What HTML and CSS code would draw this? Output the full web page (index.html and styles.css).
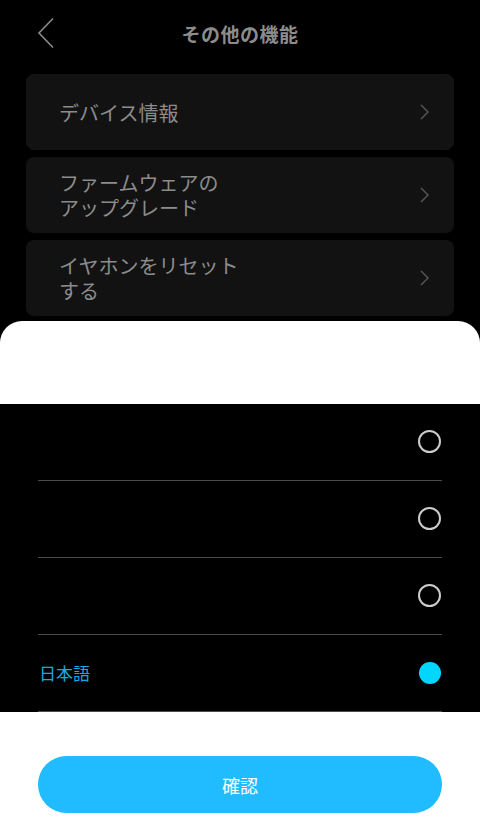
FILE: index.html
```html
<!DOCTYPE html>
<html lang="ja">
<head>
    <meta charset="UTF-8">
    <meta name="viewport" content="width=device-width, initial-scale=1.0">
    <title>その他の機能</title>
    <link rel="stylesheet" href="styles.css">
</head>
<body>
    <div class="screen">
        <header class="top-bar">
            <button type="button" class="back-btn" aria-label="戻る">
                <svg width="18" height="32" viewBox="0 0 18 32" fill="none">
                    <path d="M16 1.5L2 16L16 30.5" stroke="#8c8c8c" stroke-width="1.6"/>
                </svg>
            </button>
            <h1>その他の機能</h1>
        </header>

        <main class="menu">
            <div class="menu-item">
                <span class="menu-label">デバイス情報</span>
                <svg class="chevron" width="9" height="16" viewBox="0 0 9 16" fill="none">
                    <path d="M1 1l7 7-7 7" stroke="#5a5a5a" stroke-width="1.4"/>
                </svg>
            </div>
            <div class="menu-item">
                <span class="menu-label">ファームウェアの<br>アップグレード</span>
                <svg class="chevron" width="9" height="16" viewBox="0 0 9 16" fill="none">
                    <path d="M1 1l7 7-7 7" stroke="#5a5a5a" stroke-width="1.4"/>
                </svg>
            </div>
            <div class="menu-item">
                <span class="menu-label">イヤホンをリセット<br>する</span>
                <svg class="chevron" width="9" height="16" viewBox="0 0 9 16" fill="none">
                    <path d="M1 1l7 7-7 7" stroke="#5a5a5a" stroke-width="1.4"/>
                </svg>
            </div>
        </main>
    </div>

    <!-- language picker sheet -->
    <div class="sheet">
        <div class="sheet-head"></div>
        <ul class="lang-list">
            <li class="lang-row"><span class="lang-name"></span><span class="radio"></span></li>
            <li class="lang-row"><span class="lang-name"></span><span class="radio"></span></li>
            <li class="lang-row"><span class="lang-name"></span><span class="radio"></span></li>
            <li class="lang-row selected"><span class="lang-name">日本語</span><span class="radio"></span></li>
        </ul>
        <div class="sheet-foot">
            <button type="button" class="confirm-btn">確認</button>
        </div>
    </div>
</body>
</html>
```

FILE: styles.css
```css
:root {
    --bg: #000000;
    --card-bg: #121212;
    --text-muted: #8c8c8c;
    --divider: #4a4a4a;
    --accent: #21bbff;
    --accent-text: #17a9e6;
    --dot: #00d6ff;
}

* {
    margin: 0;
    padding: 0;
    box-sizing: border-box;
}

body {
    font-family: "Noto Sans CJK JP", "Noto Sans", sans-serif;
    background: var(--bg);
    color: var(--text-muted);
    height: 833px;
    overflow: hidden;
}

.top-bar {
    height: 66px;
    display: flex;
    align-items: center;
    justify-content: center;
    position: relative;
}

.back-btn {
    position: absolute;
    left: 37px;
    top: 17px;
    background: none;
    border: none;
    display: flex;
}

.top-bar h1 {
    font-size: 19px;
    font-weight: 700;
    color: var(--text-muted);
    letter-spacing: 0.5px;
}

.menu {
    margin: 8px 26px 0;
    display: flex;
    flex-direction: column;
    gap: 7px;
}

.menu-item {
    height: 76px;
    background: var(--card-bg);
    border-radius: 8px;
    display: flex;
    align-items: center;
    justify-content: space-between;
    padding: 0 25px 0 33px;
}

.menu-label {
    font-size: 20px;
    line-height: 25px;
    color: var(--text-muted);
}

.sheet {
    position: fixed;
    left: 0;
    right: 0;
    bottom: 0;
    height: 512px;
    background: #ffffff;
    border-radius: 22px 22px 0 0;
    display: flex;
    flex-direction: column;
}

.sheet-head {
    height: 83px;
}

.lang-list {
    list-style: none;
    background: var(--bg);
    padding: 0 38px;
}

.lang-row {
    height: 77px;
    display: flex;
    align-items: center;
    justify-content: space-between;
    border-bottom: 1px solid var(--divider);
    padding-bottom: 1px;
}

.lang-name {
    font-size: 17px;
    color: var(--accent-text);
    margin-left: 1px;
}

.radio {
    width: 23px;
    height: 23px;
    border-radius: 50%;
    border: 2px solid #cccccc;
    margin-right: 1px;
}

.lang-row.selected .radio {
    border: none;
    background: var(--dot);
    width: 22px;
    height: 22px;
}

.sheet-foot {
    flex: 1;
    padding: 44px 38px 0;
}

.confirm-btn {
    width: 100%;
    height: 57px;
    border: none;
    border-radius: 29px;
    background: var(--accent);
    color: #ffffff;
    font-family: inherit;
    font-size: 18px;
}
```
